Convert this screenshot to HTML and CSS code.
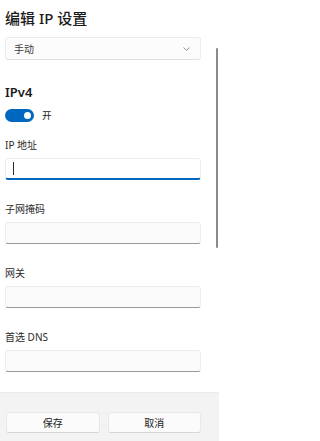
FILE: index.html
```html
<!DOCTYPE html>
<html lang="zh-CN">
<head>
<meta charset="utf-8">
<link rel="stylesheet" href="styles.css">
</head>
<body>
<div class="dialog">
  <div class="content">
    <div class="title">编辑 IP 设置</div>
    <div class="select">
      <span>手动</span>
      <svg class="chev" width="7" height="4" viewBox="0 0 7 4"><path d="M0.5 0.5 L3.5 3.3 L6.5 0.5" fill="none" stroke="#8a8a8a" stroke-width="0.9"/></svg>
    </div>
    <div class="heading">IPv4</div>
    <div class="toggle-row">
      <span class="toggle"><span class="knob"></span></span>
      <span class="toggle-label">开</span>
    </div>
    <div class="field">
      <div class="label">IP 地址</div>
      <div class="input focused"><span class="caret"></span></div>
    </div>
    <div class="field">
      <div class="label">子网掩码</div>
      <div class="input"></div>
    </div>
    <div class="field">
      <div class="label">网关</div>
      <div class="input"></div>
    </div>
    <div class="field">
      <div class="label">首选 DNS</div>
      <div class="input"></div>
    </div>
    <div class="scrollbar"></div>
  </div>
  <div class="footer">
    <div class="btn">保存</div>
    <div class="btn">取消</div>
  </div>
</div>
</body>
</html>
```

FILE: styles.css
```css
html, body {
  margin: 0;
  padding: 0;
  background: #ffffff;
}
body {
  font-family: "Noto Sans", "Noto Sans CJK SC", sans-serif;
  color: #1b1b1b;
  width: 219px;
  height: 441px;
  overflow: hidden;
}
.dialog {
  display: flex;
  flex-direction: column;
  height: 441px;
}
.content {
  position: relative;
  flex: 1;
  padding: 8px 18px 0 5px;
}
.title {
  font-size: 15px;
  line-height: 20px;
  font-weight: 500;
}
.select {
  margin-top: 9px;
  height: 23px;
  box-sizing: border-box;
  border: 1px solid #ececec;
  border-bottom-color: #e0e0e0;
  border-radius: 3px;
  background: #fcfcfc;
  display: flex;
  align-items: center;
  justify-content: space-between;
  padding: 0 10px 0 8px;
  font-size: 10px;
  color: #3a3a3a;
}
.chev { display: block; }
.heading {
  margin-top: 23px;
  font-size: 13px;
  line-height: 18px;
  font-weight: 600;
}
.toggle-row {
  margin-top: 7px;
  height: 14px;
  display: flex;
  align-items: center;
  gap: 8px;
}
.toggle {
  width: 29px;
  height: 13px;
  border-radius: 7px;
  background: #0067c0;
  display: flex;
  align-items: center;
  justify-content: flex-end;
  padding-right: 3px;
  box-sizing: border-box;
}
.knob {
  width: 7px;
  height: 7px;
  border-radius: 50%;
  background: #ffffff;
}
.toggle-label {
  font-size: 9.5px;
  color: #1b1b1b;
}
.field {
  margin-top: 16px;
}
.field + .field {
  margin-top: 22px;
}
.label {
  font-size: 10px;
  line-height: 14px;
  color: #2a2a2a;
}
.input {
  margin-top: 6px;
  height: 22px;
  box-sizing: border-box;
  border: 1px solid #ededed;
  border-bottom: 1px solid #9a9a9a;
  border-radius: 3px;
  background: #fbfbfb;
  display: flex;
  align-items: center;
  padding-left: 7px;
}
.input.focused {
  background: #ffffff;
  border-bottom: 2px solid #0067c0;
}
.caret {
  width: 1px;
  height: 13px;
  background: #2a2a2a;
}
.scrollbar {
  position: absolute;
  left: 216px;
  top: 48px;
  width: 2px;
  height: 200px;
  border-radius: 1px;
  background: #8a8a8a;
}
.footer {
  height: 49px;
  box-sizing: border-box;
  background: #f3f3f3;
  border-top: 1px solid #ebebeb;
  padding: 19px 18px 0 6px;
  display: flex;
  gap: 8px;
}
.btn {
  flex: 1;
  height: 21px;
  box-sizing: border-box;
  border: 1px solid #e8e8e8;
  border-bottom-color: #d6d6d6;
  border-radius: 3px;
  background: #fbfbfb;
  font-size: 10px;
  color: #1b1b1b;
  display: flex;
  align-items: center;
  justify-content: center;
}
```
